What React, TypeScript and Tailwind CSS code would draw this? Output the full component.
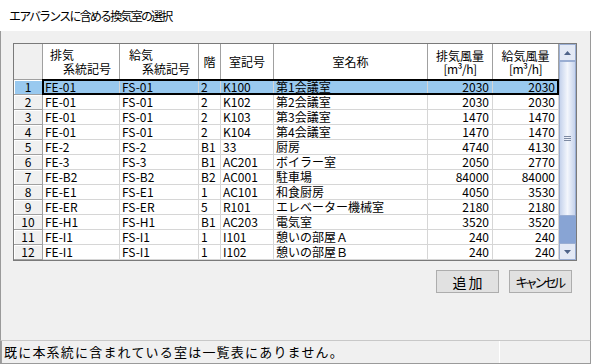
import { FC } from "react";

type Row = [string, string, string, string, string, string, string];

const rows: Row[] = [
  ["FE-01", "FS-01", "2", "K100", "第1会議室", "2030", "2030"],
  ["FE-01", "FS-01", "2", "K102", "第2会議室", "2030", "2030"],
  ["FE-01", "FS-01", "2", "K103", "第3会議室", "1470", "1470"],
  ["FE-01", "FS-01", "2", "K104", "第4会議室", "1470", "1470"],
  ["FE-2", "FS-2", "B1", "33", "厨房", "4740", "4130"],
  ["FE-3", "FS-3", "B1", "AC201", "ボイラー室", "2050", "2770"],
  ["FE-B2", "FS-B2", "B2", "AC001", "駐車場", "84000", "84000"],
  ["FE-E1", "FS-E1", "1", "AC101", "和食厨房", "4050", "3530"],
  ["FE-ER", "FS-ER", "5", "R101", "エレベーター機械室", "2180", "2180"],
  ["FE-H1", "FS-H1", "B1", "AC203", "電気室", "3520", "3520"],
  ["FE-I1", "FS-I1", "1", "I101", "憩いの部屋Ａ", "240", "240"],
  ["FE-I1", "FS-I1", "1", "I102", "憩いの部屋Ｂ", "240", "240"],
];

// column widths incl. right grid line
const colW = ["w-[77px]", "w-[79px]", "w-[22px]", "w-[53px]", "w-[154px]", "w-[65px]", "w-[66px]"];

const Grid: FC = () => {
  return (
    <div className="flex w-[564px] h-[218px] border border-[#7a7a7a] bg-white">
      <div className="flex flex-col w-[545px]">
        {/* ヘッダー */}
        <div className="flex h-[36px] shrink-0">
          <div className="w-[29px] shrink-0 bg-[#f0f0f0] border-r border-b border-[#a0a0a0]" />
          <div className={`${colW[0]} shrink-0 border-r border-b border-[#a0a0a0] flex flex-col justify-center leading-[14px]`}>
            <span className="pl-[7px]">排気</span>
            <span className="pl-[20px]">系統記号</span>
          </div>
          <div className={`${colW[1]} shrink-0 border-r border-b border-[#a0a0a0] flex flex-col justify-center leading-[14px]`}>
            <span className="pl-[9px]">給気</span>
            <span className="pl-[22px]">系統記号</span>
          </div>
          <div className={`${colW[2]} shrink-0 border-r border-b border-[#a0a0a0] flex items-center justify-center`}>階</div>
          <div className={`${colW[3]} shrink-0 border-r border-b border-[#a0a0a0] flex items-center justify-center`}>室記号</div>
          <div className={`${colW[4]} shrink-0 border-r border-b border-[#a0a0a0] flex items-center justify-center`}>室名称</div>
          <div className={`${colW[5]} shrink-0 border-r border-b border-[#a0a0a0] flex flex-col items-center justify-center leading-[13px]`}>
            <span>排気風量</span>
            <span className="tracking-[-0.5px]">[m³/h]</span>
          </div>
          <div className={`${colW[6]} shrink-0 border-r border-b border-[#a0a0a0] flex flex-col items-center justify-center leading-[13px]`}>
            <span>給気風量</span>
            <span className="tracking-[-0.5px]">[m³/h]</span>
          </div>
        </div>

        {/* 行 */}
        {rows.map((r, i) => {
          const sel = i === 0;
          return (
            <div key={i} className="relative flex h-[15px] shrink-0">
              <div
                className={`w-[29px] shrink-0 border-r border-b border-[#a0a0a0] shadow-[inset_1px_1px_0_#fff] text-center leading-[14px] ${
                  sel ? "bg-[#99c9ef]" : "bg-[#f0f0f0]"
                }`}
              >
                {i + 1}
              </div>
              {r.map((c, j) => (
                <div
                  key={j}
                  className={`${colW[j]} shrink-0 border-r border-b border-[#d6d6d6] leading-[14px] whitespace-nowrap ${
                    j >= 5 ? "text-right pr-[3px]" : "pl-[2px]"
                  } ${sel ? "bg-[#99c9ef]" : ""}`}
                >
                  {c}
                </div>
              ))}
              {sel && <div className="absolute left-[28px] top-[-1px] w-[517px] h-[16px] border-2 border-black z-10" />}
            </div>
          );
        })}
      </div>

      {/* スクロールバー */}
      <div className="flex flex-col w-[17px] shrink-0 bg-[#88a4d4]">
        <div className="h-[17px] shrink-0 bg-[#e3e9f5] border border-[#9aaed3] flex items-center justify-center">
          <svg width="7" height="4" viewBox="0 0 7 4">
            <path d="M3.5 0L7 4H0z" fill="#4e6389" />
          </svg>
        </div>
        <div className="h-[155px] shrink-0 border border-[#9aaed3] bg-gradient-to-r from-[#c6d3ec] via-[#f3f6fc] to-[#c6d3ec] flex items-center justify-center">
          <svg width="7" height="6" viewBox="0 0 7 6">
            <path d="M0 0.5H7M0 2.5H7M0 4.5H7" stroke="#7d8aa3" strokeWidth="1" />
          </svg>
        </div>
        <div className="flex-1" />
        <div className="h-[17px] shrink-0 bg-[#e3e9f5] border border-[#9aaed3] flex items-center justify-center">
          <svg width="7" height="4" viewBox="0 0 7 4">
            <path d="M0 0H7L3.5 4z" fill="#4e6389" />
          </svg>
        </div>
      </div>
    </div>
  );
};

const App: FC = () => {
  return (
    <div className="w-[591px] h-[364px] flex flex-col bg-[#f0f0f0] text-[12px] text-black font-['Noto_Sans_CJK_JP',sans-serif] overflow-hidden">
      {/* タイトル */}
      <div className="h-[31px] shrink-0 bg-white flex items-center pl-[9px] tracking-[-1.8px]">
        エアバランスに含める換気室の選択
      </div>

      {/* 本体 */}
      <div className="h-[309px] shrink-0 border-x border-[#9a9a9a] pl-[12px] pt-[12px] pr-[18px] flex flex-col">
        <Grid />
        <div className="flex justify-end gap-[10px] mt-[9px]">
          <button className="w-[63px] h-[23px] border border-[#adadad] bg-[#e1e1e1] text-[14px] tracking-[2px] pl-[2px] leading-none">
            追加
          </button>
          <button className="w-[63px] h-[23px] border border-[#adadad] bg-[#e1e1e1] text-[13px] tracking-[-3.5px] pr-[3px] leading-none">
            キャンセル
          </button>
        </div>
      </div>

      {/* ステータスバー */}
      <div className="h-[24px] shrink-0 flex border-t border-[#c8c8c8] border-x border-b border-x-[#9a9a9a] border-b-[#9a9a9a]">
        <div className="w-[499px] border-r border-r-white border-l border-l-[#a0a0a0] flex items-center pl-[2px] text-[13px] tracking-[1.2px] whitespace-nowrap">
          既に本系統に含まれている室は一覧表にありません。
        </div>
        <div className="flex-1" />
      </div>
    </div>
  );
};

export default App;
